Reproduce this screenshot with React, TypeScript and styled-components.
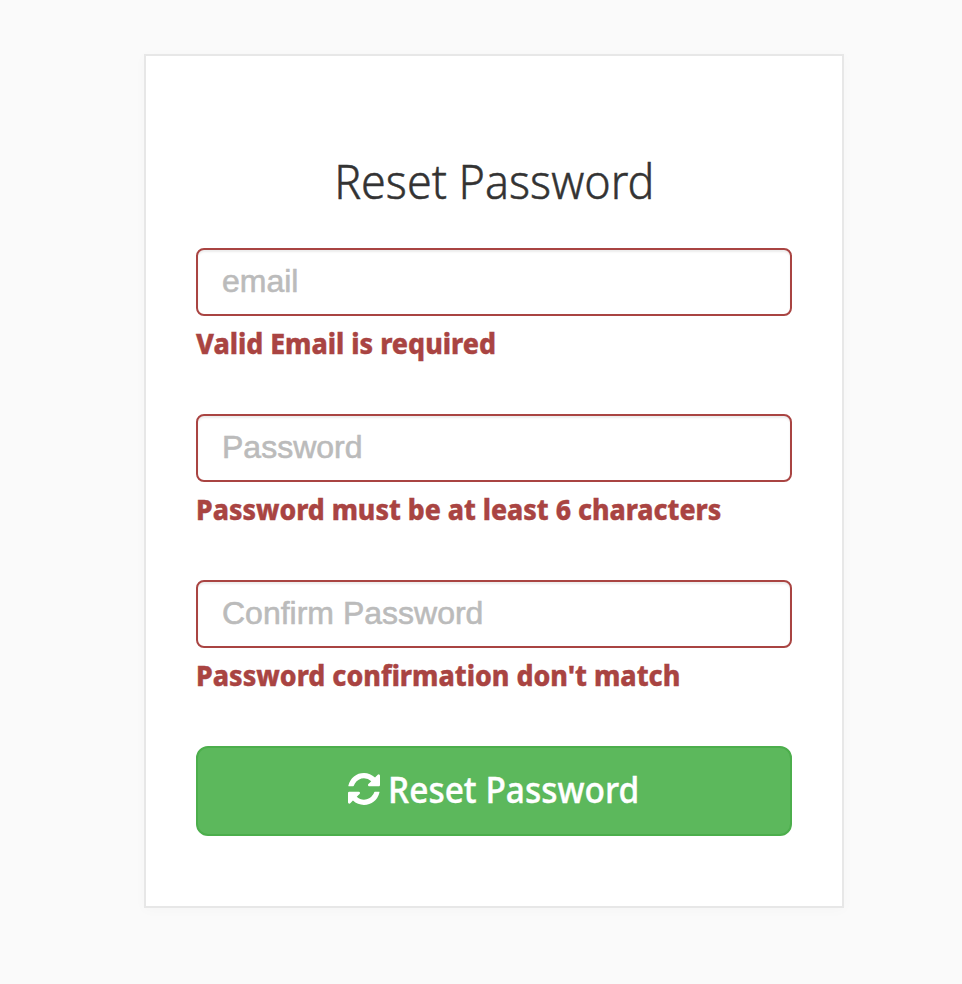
import React from 'react';
import styled, { createGlobalStyle } from 'styled-components';

const Global = createGlobalStyle`
  *, *::before, *::after { box-sizing: border-box; }
  body { margin: 0; background: #fafafa; }
`;

const Page = styled.main`
  display: flex;
  height: 984px;
  padding: 54px 0 0 144px;
  align-items: flex-start;
  font-family: "Noto Sans", sans-serif;
`;

const Card = styled.form`
  display: flex;
  flex-direction: column;
  width: 700px;
  height: 854px;
  padding: 95px 50px 0;
  background: #fff;
  border: 2px solid #e7e7e7;
  box-shadow: 0 2px 12px rgba(0, 0, 0, 0.025);
`;

const Title = styled.h1`
  margin: 0 0 37px;
  height: 60px;
  line-height: 60px;
  font-size: 48px;
  font-weight: 300;
  color: #333;
  text-align: center;
  white-space: nowrap;
  -webkit-text-stroke: 0.5px #333;
`;

const Condensed = styled.span<{ $scale: number; $origin?: string }>`
  display: inline-block;
  transform: scaleX(${p => p.$scale});
  transform-origin: ${p => p.$origin ?? 'left'} center;
`;

const Field = styled.div`
  height: 166px;
`;

const Input = styled.input`
  display: block;
  width: 596px;
  height: 68px;
  padding: 0 24px 2px;
  border: 2px solid #a94442;
  border-radius: 8px;
  background: #fff;
  box-shadow: inset 0 2px 2px rgba(0, 0, 0, 0.075);
  font: 32px "Liberation Sans", sans-serif;
  outline: 0;
  &::placeholder {
    color: #bbb;
    opacity: 1;
    -webkit-text-stroke: 0.6px #bbb;
  }
`;

const ErrorText = styled.div`
  margin-top: 7px;
  height: 40px;
  line-height: 40px;
  font-size: 28px;
  font-weight: 800;
  color: #a94442;
  white-space: nowrap;
  -webkit-text-stroke: 0.4px #a94442;
`;

const Button = styled.button`
  display: flex;
  align-items: center;
  justify-content: center;
  gap: 8px;
  width: 596px;
  height: 90px;
  padding: 0 0 4px;
  border: 2px solid #4cae4c;
  border-radius: 12px;
  background: #5cb85c;
  color: #fff;
  font: 500 36px "Noto Sans", sans-serif;
  -webkit-text-stroke: 0.4px #fff;
`;

const ButtonLabel = styled(Condensed)`
  margin-right: -19px;
`;

const fields = [
  { label: 'email', type: 'email', error: 'Valid Email is required', scale: 0.955 },
  { label: 'Password', type: 'password', error: 'Password must be at least 6 characters', scale: 0.95 },
  { label: 'Confirm Password', type: 'password', error: "Password confirmation don't match", scale: 0.955 },
];

export default function App() {
  return (
    <>
      <Global />
      <Page>
        <Card>
          <Title><Condensed $scale={0.935} $origin="center">Reset Password</Condensed></Title>
          {fields.map(f => (
            <Field key={f.label}>
              <Input type={f.type} placeholder={f.label} aria-label={f.label} />
              <ErrorText><Condensed $scale={f.scale}>{f.error}</Condensed></ErrorText>
            </Field>
          ))}
          <Button type="button">
            <svg width="32" height="32" viewBox="0 0 1536 1536" fill="currentColor" aria-hidden="true">
              <path d="M1511 928q0 5-1 7-64 268-268 434.500T764 1536q-146 0-282.500-55T238 1324l-129 129q-19 19-45 19t-45-19-19-45V960q0-26 19-45t45-19h448q26 0 45 19t19 45-19 45l-137 137q71 66 161 102t187 36q134 0 250-65t186-179q11-17 53-117 8-23 30-23h192q13 0 22.500 9.500t9.500 22.500zm25-800v448q0 26-19 45t-45 19h-448q-26 0-45-19t-19-45 19-45l138-138Q969 256 768 256q-134 0-250 65T332 500q-11 17-53 117-8 23-30 23H50q-13 0-22.500-9.500T18 608v-7q65-268 270-434.500T768 0q146 0 284 55.500T1297 212l130-129q19-19 45-19t45 19 19 45z" />
            </svg>
            <ButtonLabel $scale={0.93}>Reset Password</ButtonLabel>
          </Button>
        </Card>
      </Page>
    </>
  );
}
